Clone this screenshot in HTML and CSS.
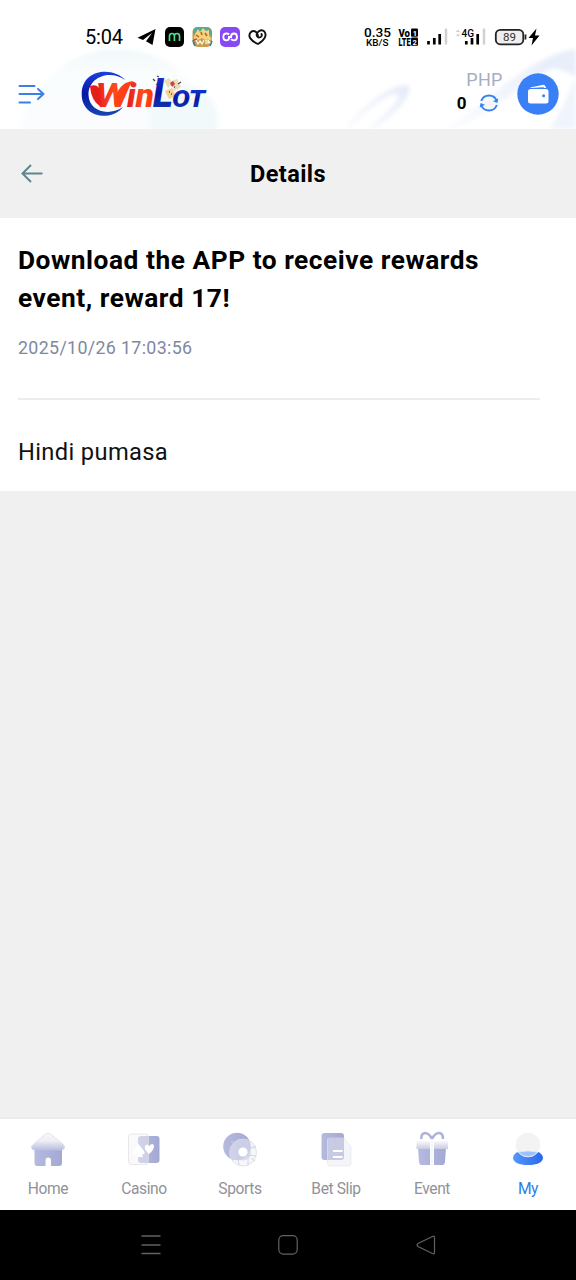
FILE: index.html
```html
<!DOCTYPE html>
<html lang="en">
<head>
<meta charset="utf-8">
<title>Details</title>
<link rel="stylesheet" href="styles.css">
</head>
<body>
<div class="screen">
  <header class="top">
    <svg class="top-art" viewBox="0 0 576 129" aria-hidden="true">
      <defs>
        <linearGradient id="sky" x1="0" y1="0" x2="0" y2="1"><stop offset="0" stop-color="#f0f8fa"/><stop offset=".12" stop-color="#fafdfe"/><stop offset="1" stop-color="#f8fcfd"/></linearGradient>
        <linearGradient id="swoosh" x1="1" y1="0" x2="0" y2="1"><stop offset="0" stop-color="#e4ebf8"/><stop offset="1" stop-color="#fdfdff"/></linearGradient>
        <filter id="soft" x="-20%" y="-20%" width="140%" height="140%"><feGaussianBlur stdDeviation="2.2"/></filter>
      </defs>
      <circle cx="118" cy="149" r="100" fill="url(#sky)" filter="url(#soft)"/>
      <circle cx="184" cy="120" r="34" fill="#f2f9fa" filter="url(#soft)"/>
      <g filter="url(#soft)">
        <path d="M342 129C362 108 390 82 409 86C413 96 391 119 374 129H366C382 117 400 102 398 95C389 91 366 111 350 129Z" fill="url(#swoosh)"/>
        <path d="M442 129C485 106 529 55 576 49V61C538 66 500 111 455 129Z" fill="url(#swoosh)"/>
        <path d="M576 76C567 98 560 112 550 129H576Z" fill="#f0f4fc"/>
        <path d="M576 49V78C568 70 554 68 538 67C550 58 562 51 576 49Z" fill="#e8effa"/>
      </g>
    </svg>
    <div class="status">
      <svg class="status-art" viewBox="0 0 576 58" role="img" aria-label="Status bar">
        <text x="85" y="44" class="clock" textLength="38">5:04</text>
        <path d="M155.500 29L137.500 37.800L143 40L152 33L146 41.300L152.500 45Z" fill="#000"/>
        <rect x="165" y="27" width="19" height="20" rx="5" fill="#000"/>
        <path d="M169.500 41V36Q169.500 33.500 172 33.500Q174.400 33.500 174.400 36V41M174.400 36Q174.400 33.500 177 33.500Q179.500 33.500 179.500 36V41" fill="none" stroke="#48df91" stroke-width="1.700"/>
        <rect x="192.500" y="27" width="19.500" height="20" rx="5" fill="#c99c53"/>
        <path d="M193 35V31Q194 27 198 27H207Q212 28 212 33V37L208 33L203 31L197 33Z" fill="#54a99b"/>
        <path d="M195 34L198 29L200 32L203 28L206 31L209 30V36L212 39L207 41L202 38L196 41L194 38Z" fill="#f4d47c"/>
        <path d="M196 35L199 37M205 33L207 36M201 32L202 35M194 40L197 39M207 39L210 42" fill="none" stroke="#bf552c" stroke-width="1.500"/>
        <path d="M196 40L198 44L200 41L202 44L204 40M206 40V44M208 44V40L211 44" stroke="#fff4da" stroke-width="1.300" fill="none"/>
        <path d="M193 40L195 46M210 46L212 41" stroke="#407f91" stroke-width="1.500"/>
        <rect x="220" y="27" width="20" height="20" rx="5" fill="#8849f5"/>
        <path d="M229.200 34.500Q228 33.500 226.500 33.500Q223.300 33.500 223.300 37Q223.300 40.300 226.500 40.300Q229.200 40.300 229.200 37M231 37Q231 33.500 234 33.500Q237 33.500 237 37Q237 40.300 234 40.300Q232 40.300 231 39.200M228 37H232" fill="none" stroke="#fff" stroke-width="1.800"/>
        <path d="M258 37C258 32 254 29.500 251 32C247 36 251 41 258 44C265 40 267 35 264.500 31.700C261 28 255.500 33 257 36C258.500 39 263 37 261.500 34" fill="none" stroke="#111" stroke-width="1.900" stroke-linecap="round"/>
        <text x="364" y="36.500" class="rate" textLength="27" lengthAdjust="spacingAndGlyphs">0.35</text>
        <text x="366" y="46" class="unit" textLength="22.500" lengthAdjust="spacingAndGlyphs">KB/S</text>
        <text x="398.500" y="36.500" class="volte" textLength="11.500" lengthAdjust="spacingAndGlyphs">Vo</text>
        <rect x="411" y="28.500" width="7" height="8.200" rx="1"/><text x="412.700" y="35.500" class="sim">1</text>
        <text x="398.500" y="45.500" class="volte" textLength="12" lengthAdjust="spacingAndGlyphs">LTE</text>
        <rect x="411" y="37.500" width="7" height="8.200" rx="1"/><text x="412.600" y="44.500" class="sim">2</text>
        <path d="M428.500 41V44.500M434.300 38V44.500M439.700 34V44.500" stroke="#000" stroke-width="2.700"/>
        <path d="M446 28.500V44.500" stroke="#d1d1d1" stroke-width="2.500"/>
        <path d="M456 32L458 29.500L460 32ZM456 34.500L458 37L460 34.500Z" fill="#ccc"/>
        <text x="461.500" y="37" class="network" textLength="12.500" lengthAdjust="spacingAndGlyphs">4G</text>
        <path d="M466.300 41V44.500M472 38V44.500M477.700 34V44.500" stroke="#000" stroke-width="2.700"/>
        <path d="M484 28.500V44.500" stroke="#d1d1d1" stroke-width="2.500"/>
        <rect x="495.800" y="29.800" width="27.500" height="14.500" rx="4.500" fill="#eee" stroke="#222" stroke-width="1.800"/>
        <path d="M525.500 34.500V39.500" stroke="#222" stroke-width="1.700"/>
        <text x="503" y="41" class="battery" textLength="13" lengthAdjust="spacingAndGlyphs">89</text>
        <path d="M536.500 28.500L528.500 38H533L531.500 45.500L539.500 35.500H535Z"/>
      </svg>
    </div>
    <div class="brandbar">
      <svg class="menu" viewBox="0 0 28 24" aria-label="Menu"><path d="M1.500 3H16.500M1.500 11H25M20 6L25.500 11L20 16M1.500 19.500H12" fill="none" stroke="#3b80e9" stroke-width="2" stroke-linecap="round" stroke-linejoin="round"/></svg>
      <svg class="logo" viewBox="0 0 130 50" aria-label="WinLot">
        <defs>
          <linearGradient id="blue" x1="0" y1="0" x2="0" y2="1"><stop stop-color="#1b3fe0"/><stop offset=".5" stop-color="#0916a4"/><stop offset="1" stop-color="#1647b1"/></linearGradient>
          <linearGradient id="red" x1="0" y1="0" x2="1" y2="0"><stop stop-color="#e51b20"/><stop offset=".55" stop-color="#ff4b18"/><stop offset="1" stop-color="#ff3408"/></linearGradient>
        </defs>
        <path d="M45 10C34-3 2-2 1.700 24C1.500 48 32 52 43 37C28 47 9 41 8.500 25C8 7 30-1 45 10Z" fill="url(#blue)"/>
        <text x="15" y="37" class="logo-w" fill="url(#red)" textLength="34" lengthAdjust="spacingAndGlyphs">W</text>
        <path d="M10 16Q19 13 20 22L21 37Q11 31 10 16Z" fill="#e61e1b"/>
        <path d="M34 34Q37 12 54 11Q47 16 44.500 25Q42 34 36 37Z" fill="#ff4214"/>
        <text x="47" y="37" class="logo-in" fill="url(#red)" textLength="27" lengthAdjust="spacingAndGlyphs">in</text>
        <g class="dice"><path d="M84 11L89 8L93 14L88 18ZM91 11L97 9L101 17L94 21Z" fill="#eadbb9"/><path d="M85 21L92 18L96 26L89 29Z" fill="#f3d28b"/><path d="M90 13L93 11L95 14L92 17Z" fill="#d43c4b"/><path d="M73 9L75 11M77 6L79 7M76 14L78 15M98 14L101 12M89 22H90M91 24H92M94 17H95" stroke="#4f4945" stroke-width="1.300"/></g>
        <text x="73" y="37" class="logo-l" fill="url(#blue)" textLength="20" lengthAdjust="spacingAndGlyphs">L</text>
        <text x="92" y="37" class="logo-ot" fill="url(#blue)" textLength="33" lengthAdjust="spacingAndGlyphs">OT</text>
      </svg>
      <div class="account">
        <div class="currency">PHP</div>
        <div class="balance"><span>0</span>
          <svg class="refresh" viewBox="0 0 20 20" aria-label="Refresh"><path d="M2.200 8A8.300 8.300 0 0 1 17.800 8M17.800 12A8.300 8.300 0 0 1 2.200 12" fill="none" stroke="#3483ee" stroke-width="1.900"/><path d="M19.300 5.500L18.400 10L14 8.200ZM.7 14.500L1.600 10L6 11.800Z" fill="#3483ee"/></svg>
        </div>
      </div>
      <svg class="wallet" viewBox="0 0 42 42" aria-label="Wallet"><circle cx="21" cy="21" r="20.700" fill="#397ff5"/><path d="M13 14.500L26.500 11.800Q28 11.700 28.500 13.500L29 15H14Z" fill="#fff"/><rect x="11" y="16" width="20.500" height="14.500" rx="2.500" fill="#fff"/><path d="M12.500 15.700L27 14.300" stroke="#397ff5" stroke-width=".7"/><circle cx="26.600" cy="22.800" r="1.500" fill="#397ff5"/></svg>
    </div>
  </header>
  <div class="titlebar">
    <svg class="back" viewBox="0 0 24 24" aria-label="Back"><path d="M22.500 11.500H3M11 3L2.500 11.500L11 20" fill="none" stroke="#5f858d" stroke-width="2"/></svg>
    <h1>Details</h1><span></span>
  </div>
  <article class="message">
    <h2>Download the APP to receive rewards event, reward 17!</h2>
    <time>2025/10/26 17:03:56</time>
    <hr>
    <p>Hindi pumasa</p>
  </article>
  <main class="space"></main>
  <nav class="tabs">
    <a class="tab"><svg viewBox="0 0 40 40"><defs><linearGradient id="roof" x1="0" y1="0" x2="0" y2="1"><stop stop-color="#f8f8f9"/><stop offset=".45" stop-color="#eeeef4"/><stop offset="1" stop-color="#b6bbe0"/></linearGradient><linearGradient id="tile"><stop stop-color="#b6badf"/><stop offset="1" stop-color="#a3a9d4"/></linearGradient></defs><path d="M6.500 17H34V34Q34 37 31 37H23V31Q23 28.500 20 28.500Q17.500 28.500 17.500 31V37H9Q6.500 37 6.500 34Z" fill="url(#tile)"/><path d="M17.500 5Q20 3 22.500 5L35.500 15.500Q38 19 35.500 20.500L33.500 21.500H6.500Q2 20 4 16.500Z" fill="url(#roof)"/><path d="M6.500 21Q2 20 4 16.500L17.500 5Q20 3 22.500 5L35.500 15.500Q38 19 34 21" fill="none" stroke="#dedee3" stroke-width=".8"/></svg><span>Home</span></a>
    <a class="tab"><svg viewBox="0 0 40 40"><rect x="14" y="7" width="21.500" height="27" rx="3" fill="url(#tile)"/><rect x="4.500" y="5" width="20" height="30.500" rx="3" fill="#f3f3f5" fill-opacity=".45" stroke="#dedee4" stroke-width=".7"/><path d="M14.500 15L9.500 22Q9 26 14 25L13 28H19L18 25Q22 26 20 22Z" fill="#fff"/><path d="M25 17Q29 13 30 17Q30 21 25 25Q19.500 20 21 17Q23 14 25 17Z" fill="#fff"/></svg><span>Casino</span></a>
    <a class="tab"><svg viewBox="0 0 40 40"><circle cx="17" cy="17.500" r="13.800" fill="url(#tile)"/><circle cx="23" cy="23.500" r="13.500" fill="#eff0f5" fill-opacity=".5" stroke="#d8d8df" stroke-width=".8"/><path d="M11 13L19 13V20L12 24M19 13L22 10M28 11L27 17L35 19M36 27L28 26L28 36M12 31L18 28L19 36M30 20L36 17M31 29L35 32" fill="none" stroke="#cfd2e2" stroke-width=".9"/><circle cx="23" cy="23.500" r="8" fill="#c9cfe8" opacity=".65"/><circle cx="23" cy="23" r="4.600" fill="#fff"/></svg><span>Sports</span></a>
    <a class="tab"><svg viewBox="0 0 40 40"><rect x="5.500" y="4" width="22.500" height="27" rx="3" fill="url(#tile)"/><path d="M13.500 9H28L35 18V34Q35 37 32 37H14Q11.500 37 11.500 34V11Q11.500 9 13.500 9Z" fill="#f0f1f5" fill-opacity=".75" stroke="#e2e2e7" stroke-width=".6"/><path d="M12 9H28V28Q28 31 25 31H12Z" fill="#b2b8da" opacity=".55"/><path d="M17 22H26.500M17 28H26.500" stroke="#fff" stroke-width="2"/></svg><span>Bet Slip</span></a>
    <a class="tab"><svg viewBox="0 0 40 40"><defs><linearGradient id="lid" x1="0" y1="0" x2="0" y2="1"><stop stop-color="#fafafa"/><stop offset="1" stop-color="#c8cbe2"/></linearGradient></defs><path d="M20 10Q23 4 27 4Q31 4 31 10M20 10Q17 4 13 4Q8.500 5 9.500 10" fill="none" stroke="#aeb2d7" stroke-width="2.500"/><path d="M6 18H18V36H9Q7.500 36 7 33ZM22 18H34L33 33Q32.500 36 31 36H22Z" fill="url(#tile)"/><path d="M4.500 12H18V20H4.500ZM22 12H36V20H22Z" fill="url(#lid)"/><path d="M20 11V36" stroke="#f7f7fa" stroke-width="3"/></svg><span>Event</span></a>
    <a class="tab active"><svg viewBox="0 0 40 40"><defs><linearGradient id="base"><stop stop-color="#5797fb"/><stop offset="1" stop-color="#2968e8"/></linearGradient></defs><path d="M5 29Q5 24 13 22H27Q35 24 35 29Q34 36 20 36Q6 36 5 29Z" fill="url(#base)"/><circle cx="20" cy="16" r="12" fill="#f3f3f4" stroke="#eeeeef" stroke-width=".5"/><path d="M10.500 23Q20 21 29.500 23Q26 27.500 20 27.500Q14 27.500 10.500 23Z" fill="#9bc0fa" stroke="#dceaff" stroke-width=".8"/></svg><span>My</span></a>
  </nav>
  <footer class="keys">
    <svg viewBox="0 0 24 24"><path d="M2.500 3H21.500M2.500 12H21.500M2.500 20.500H21.500" stroke="#626262" stroke-width="1.400"/></svg>
    <svg viewBox="0 0 24 24"><rect x="2.800" y="2.700" width="18.400" height="18.400" rx="4.500" fill="none" stroke="#626262" stroke-width="1.200"/></svg>
    <svg viewBox="0 0 24 24"><path d="M20.500 4.500V19.500Q20.500 21.500 18.500 20.500L4 13.500Q2 12 4 10.500L18.500 3.500Q20.500 2.500 20.500 4.500Z" fill="none" stroke="#626262" stroke-width="1.200"/></svg>
  </footer>
</div>
</body>
</html>
```
FILE: styles.css
```css
* { box-sizing: border-box; }
body { margin: 0; font-family: Roboto, "Noto Sans", sans-serif; background: #f0f0f0; color: #000; }
.screen { width: 576px; height: 1280px; display: flex; flex-direction: column; }
.screen svg { display: block; }
.top { position: relative; height: 129px; background: #fff; overflow: hidden; }
.top-art { position: absolute; inset: 0; width: 576px; height: 129px; }
.status { position: relative; height: 58px; }
.status-art { width: 576px; height: 58px; }
.clock { font-size: 20px; }
.rate { font-size: 12px; font-weight: 500; }
.unit { font-size: 9px; font-weight: 500; }
.volte { font-size: 10px; font-weight: 900; }
.sim { font-size: 7.5px; font-weight: 700; fill: #fff; }
.network { font-size: 11px; font-weight: 500; }
.battery { font-size: 11px; fill: #333; }
.brandbar { position: relative; height: 71px; display: flex; align-items: flex-start; padding: 12px 17.5px 0 18px; }
.menu { width: 28px; height: 24px; margin-top: 13px; }
.logo { width: 130px; height: 50px; margin: 0 0 0 34px; overflow: visible; }
.logo text { font-style: italic; font-weight: 900; }
.logo .logo-w { font-size: 34px; font-weight: 700; }
.logo .logo-in { font-size: 34px; }
.logo .logo-l { font-size: 41px; }
.logo .logo-ot { font-size: 24px; }
.account { width: 60px; margin-left: auto; }
.currency { color: #a6adc2; font-size: 18px; line-height: 20px; text-align: right; letter-spacing: .2px; }
.balance { display: flex; align-items: center; justify-content: flex-end; gap: 12px; height: 26px; font-size: 17px; font-weight: 700; padding-right: 4px; }
.refresh { width: 20px; height: 20px; }
.wallet { width: 42px; height: 42px; margin: 3px 0 0 14px; }
.titlebar { height: 89px; display: grid; grid-template-columns: 24px 1fr 24px; align-items: center; padding: 0 20px; background: #f0f0f0; }
.back { width: 24px; height: 24px; }
h1 { margin: 1px 0 0; text-align: center; font-size: 23.5px; line-height: 32px; letter-spacing: .4px; font-weight: 700; }
.message { height: 273px; padding: 23px 36px 0 18px; background: #fff; }
h2 { margin: 0; font-size: 26.3px; line-height: 38px; letter-spacing: .53px; font-weight: 700; }
time { display: block; margin-top: 20px; color: #8088a0; font-size: 17.8px; line-height: 22px; letter-spacing: .36px; }
hr { border: 0; height: 2px; background: #ededed; margin: 39px 0 37px; }
.message p { margin: 0; color: #111; font-size: 23.7px; line-height: 30px; letter-spacing: .35px; }
.space { flex: 1; }
.tabs { height: 93px; display: grid; grid-template-columns: repeat(6, 1fr); padding-top: 10px; background: #fff; border-top: 2px solid #eaebeb; }
.tab { display: flex; flex-direction: column; align-items: center; color: #919299; font-size: 15.6px; line-height: 20px; letter-spacing: -.4px; }
.tab svg { width: 40px; height: 40px; margin-bottom: 10px; }
.tab.active { color: #2f7ee8; }
.keys { height: 70px; background: #000; display: flex; justify-content: center; gap: 113.500px; padding-top: 23px; }
.keys svg { width: 24px; height: 24px; }
```
